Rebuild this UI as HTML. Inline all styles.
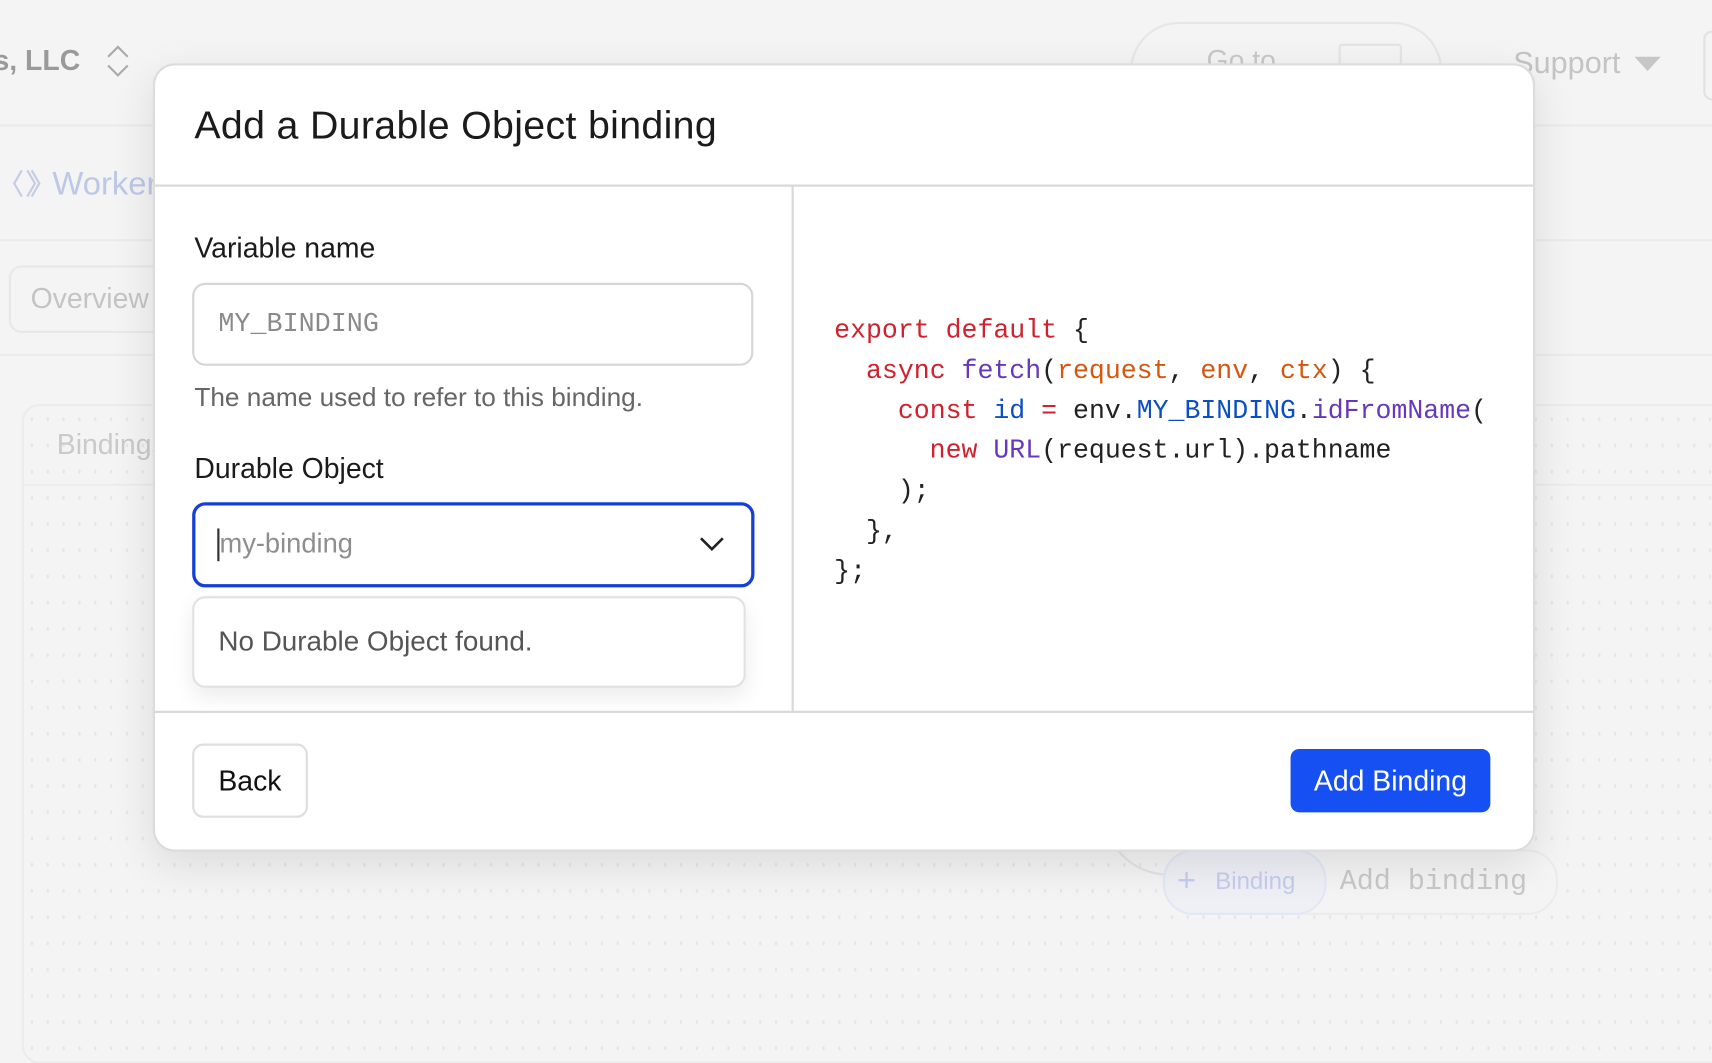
<!DOCTYPE html>
<html><head><meta charset="utf-8">
<style>
html,body{margin:0;padding:0;width:1712px;height:986px;overflow:hidden;background:#f4f4f4;}
#w{position:absolute;left:0;top:0;width:1568px;height:903px;transform:scale(1.09184);transform-origin:0 0;font-family:"Liberation Sans",sans-serif;}
.a{position:absolute;}
.dots{background-image:radial-gradient(#e6e6e6 1px,transparent 1.3px);background-size:14.5px 24px;}
.mono{font-family:"Liberation Mono",monospace;}
.r{color:#cf222e}.p{color:#6639ba}.o{color:#d4570f}.b{color:#0b4fc4}
</style></head><body><div id="w">
<div class="a" style="left:0;top:0;width:1568px;height:114px;border-bottom:2px solid #ebebeb;"></div>
<div class="a" style="left:-6px;top:40px;font-size:26px;font-weight:bold;color:#9a9a9a;">s, LLC</div>
<svg class="a" style="left:96px;top:40px" width="24" height="32" viewBox="0 0 24 32"><path d="M3 12 L12 3 L21 12 M3 20 L12 29 L21 20" fill="none" stroke="#aaa" stroke-width="2"/></svg>
<div class="a" style="left:1035px;top:20px;width:282px;height:90px;border:2px solid #e6e6e6;border-radius:45px;"></div>
<div class="a" style="left:1105px;top:40px;font-size:26px;color:#c8c8c8;">Go to</div>
<div class="a" style="left:1226px;top:40px;width:54px;height:30px;border:2px solid #e4e4e4;border-radius:3px;"></div>
<div class="a" style="left:1386px;top:42px;font-size:28px;color:#c4c4c4;">Support</div>
<div class="a" style="left:1497px;top:52px;border-left:12px solid transparent;border-right:12px solid transparent;border-top:13px solid #c6c6c6;"></div>
<div class="a" style="left:1560px;top:28px;width:20px;height:60px;border:2px solid #e2e2e2;border-radius:8px;"></div>
<div class="a" style="left:0;top:219px;width:1568px;height:2px;background:#ebebeb;"></div>
<svg class="a" style="left:10px;top:153px" width="30" height="30" viewBox="0 0 30 30"><path d="M10 3 L3 15 L10 27 M15 3 L22 15 L15 27 M19 3 L26 15 L19 27" fill="none" stroke="#c4cde6" stroke-width="2"/></svg>
<div class="a" style="left:48px;top:152px;font-size:30px;color:#bcc8e6;">Workers</div>
<div class="a" style="left:8px;top:243px;width:200px;height:58px;border:2px solid #e8e8e8;border-radius:12px;"></div>
<div class="a" style="left:28px;top:258px;font-size:26px;color:#c4c4c4;">Overview</div>
<div class="a" style="left:0;top:324px;width:1568px;height:2px;background:#ebebeb;"></div>
<div class="a dots" style="left:20px;top:370px;width:1560px;height:600px;border:2px solid #ececec;border-radius:16px;background-color:#f4f4f4;"></div>
<div class="a" style="left:20px;top:443px;width:1560px;height:2px;background:#ececec;"></div>
<div class="a" style="left:52px;top:392px;font-size:26px;color:#cacaca;">Bindings</div>
<div class="a" style="left:1010px;top:700px;width:120px;height:100px;border-left:2px solid #e4e4e4;border-bottom:2px solid #e4e4e4;border-radius:0 0 0 60px;"></div>
<div class="a" style="left:1065px;top:778px;width:358px;height:56px;border:2px solid #ececec;border-radius:28px;background:#f4f4f4;"></div>
<div class="a" style="left:1065px;top:778px;width:146px;height:56px;border:2px solid #e2e8f6;border-radius:28px;background:#eef0f6;"></div>
<div class="a" style="left:1078px;top:790px;font-size:30px;color:#c4cdee;">+</div>
<div class="a" style="left:1113px;top:794px;font-size:22px;color:#c4cdee;">Binding</div>
<div class="a mono" style="left:1227px;top:792px;font-size:26px;color:#c8c8c8;">Add binding</div>

<div class="a" style="left:140px;top:58px;width:1262px;height:718px;background:#fff;border:2px solid #dcdcdc;border-radius:20px;box-shadow:0 12px 40px rgba(0,0,0,0.10);"></div>
<div class="a" style="left:178px;top:94px;font-size:36px;font-weight:500;color:#1b1b1b;letter-spacing:0.3px;">Add a Durable Object binding</div>
<div class="a" style="left:142px;top:169px;width:1262px;height:2px;background:#d8d8d8;"></div>
<div class="a" style="left:725px;top:171px;width:2px;height:481px;background:#d8d8d8;"></div>
<div class="a" style="left:142px;top:651px;width:1262px;height:2px;background:#d8d8d8;"></div>

<div class="a" style="left:178px;top:212px;font-size:26px;font-weight:500;color:#1b1b1b;">Variable name</div>
<div class="a" style="left:176px;top:259px;width:510px;height:72px;border:2px solid #d6d6d6;border-radius:12px;"></div>
<div class="a mono" style="left:200px;top:284px;font-size:24.5px;color:#8a8a8a;">MY_BINDING</div>
<div class="a" style="left:178px;top:351px;font-size:24px;color:#666;">The name used to refer to this binding.</div>
<div class="a" style="left:178px;top:414px;font-size:26px;font-weight:500;color:#1b1b1b;">Durable Object</div>
<div class="a" style="left:176px;top:460px;width:509px;height:72px;border:3px solid #1440d8;border-radius:12px;"></div>
<div class="a" style="left:199px;top:484px;width:2px;height:30px;background:#333;"></div>
<div class="a" style="left:201px;top:484px;font-size:25px;color:#8e8e8e;">my-binding</div>
<svg class="a" style="left:640px;top:489px" width="24" height="18" viewBox="0 0 24 18"><path d="M2 4 L12 14 L22 4" fill="none" stroke="#222" stroke-width="2.4"/></svg>
<div class="a" style="left:176px;top:546px;width:503px;height:80px;border:2px solid #e2e2e2;border-radius:12px;background:#fff;box-shadow:0 8px 20px rgba(0,0,0,0.08);"></div>
<div class="a" style="left:200px;top:574px;font-size:25.5px;color:#555;">No Durable Object found.</div>

<div class="a mono" style="left:764px;top:286px;font-size:24.3px;line-height:36.8px;color:#222;white-space:pre;"><span class="r">export default</span> {
  <span class="r">async</span> <span class="p">fetch</span>(<span class="o">request</span>, <span class="o">env</span>, <span class="o">ctx</span>) {
    <span class="r">const</span> <span class="b">id</span> <span class="r">=</span> env.<span class="b">MY_BINDING</span>.<span class="p">idFromName</span>(
      <span class="r">new</span> <span class="p">URL</span>(request.url).pathname
    );
  },
};</div>

<div class="a" style="left:176px;top:681px;width:102px;height:64px;border:2px solid #dedede;border-radius:10px;"></div>
<div class="a" style="left:200px;top:700px;font-size:26px;color:#111;">Back</div>
<div class="a" style="left:1182px;top:686px;width:183px;height:58px;background:#1650f2;border-radius:8px;"></div>
<div class="a" style="left:1182px;top:700px;width:183px;text-align:center;font-size:26px;color:#fff;">Add Binding</div>
</div></body></html>
